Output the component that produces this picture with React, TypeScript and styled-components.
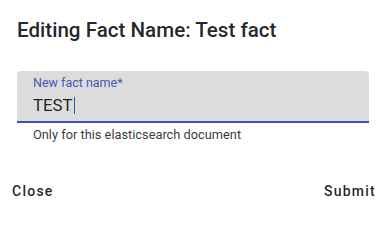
import React from "react";
import styled, { createGlobalStyle } from "styled-components";

const GlobalStyle = createGlobalStyle`
  html, body {
    margin: 0;
    padding: 0;
    background: #fff;
  }
  body {
    font-family: Roboto, "Liberation Sans", Arial, sans-serif;
    -webkit-font-smoothing: antialiased;
  }
`;

const Dialog = styled.div`
  width: 389px;
  height: 217px;
  box-sizing: border-box;
  padding-top: 14px;
  display: flex;
  flex-direction: column;
  background: #fff;
`;

const Title = styled.h2`
  margin: 0;
  padding: 0 17px;
  font-size: 20.6px;
  font-weight: 500;
  line-height: 32px;
  color: rgba(0, 0, 0, 0.87);
`;

const Content = styled.div`
  padding: 25px 20px 0 17px;
`;

const Field = styled.div`
  background: #dcdcdc;
  border-radius: 4px 4px 0 0;
  border-bottom: 2px solid #3f51b5;
  padding: 5px 16px 6px;
  display: flex;
  flex-direction: column;
`;

const Label = styled.label`
  font-size: 12.5px;
  line-height: 14px;
  color: #4757b8;
`;

const InputText = styled.div`
  margin-top: 6px;
  font-size: 16.8px;
  line-height: 19px;
  color: rgba(0, 0, 0, 0.87);
  display: flex;
  align-items: center;
`;

const Caret = styled.span`
  display: inline-block;
  width: 1px;
  height: 17px;
  margin-left: 1px;
  background: #3f51b5;
`;

const Helper = styled.p`
  margin: 4px 0 0;
  padding-left: 16px;
  font-size: 12.8px;
  line-height: 15px;
  color: rgba(0, 0, 0, 0.8);
`;

const Actions = styled.div`
  margin-top: auto;
  padding: 0 13px 14px 12px;
  display: flex;
  justify-content: space-between;
  align-items: center;
`;

const Button = styled.button`
  border: none;
  background: transparent;
  padding: 0;
  font-family: inherit;
  font-size: 14px;
  font-weight: 500;
  line-height: 24px;
  letter-spacing: 1.25px;
  color: rgba(0, 0, 0, 0.87);
  cursor: pointer;
`;

export default function App() {
  return (
    <>
      <GlobalStyle />
      <Dialog>
        <Title>Editing Fact Name: Test fact</Title>
        <Content>
          <Field>
            <Label>New fact name*</Label>
            <InputText>
              TEST
              <Caret />
            </InputText>
          </Field>
          <Helper>Only for this elasticsearch document</Helper>
        </Content>
        <Actions>
          <Button>Close</Button>
          <Button>Submit</Button>
        </Actions>
      </Dialog>
    </>
  );
}
